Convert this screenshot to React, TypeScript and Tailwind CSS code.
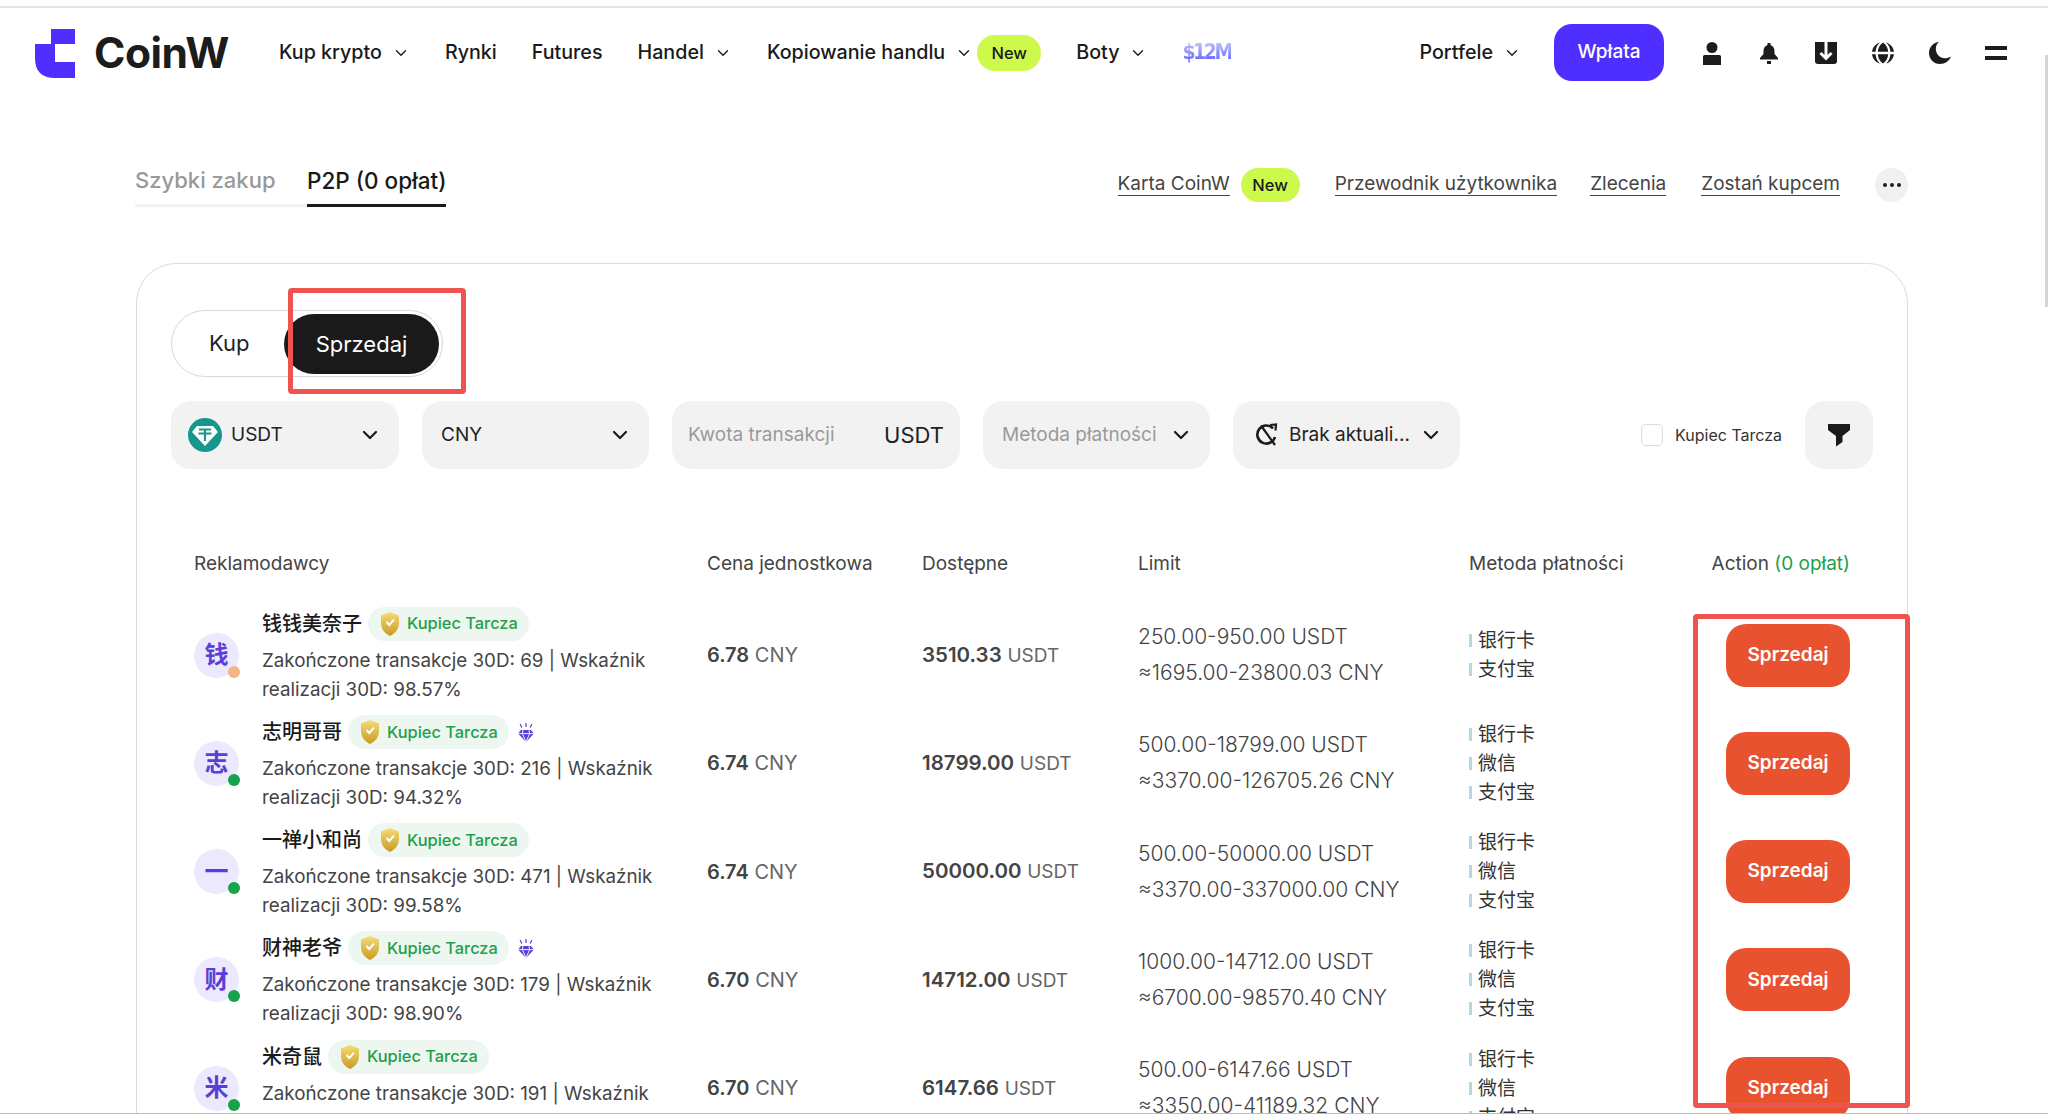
import { ChevronDown } from 'lucide-react';

type Row = {
  name: string;
  initial: string;
  diamond: boolean;
  online: boolean;
  orders: number;
  rate: string;
  price: string;
  avail: string;
  limit: string;
  limitCny: string;
  pay: string[];
};

const rows: Row[] = [
  { name: '钱钱美奈子', initial: '钱', diamond: false, online: false, orders: 69, rate: '98.57', price: '6.78', avail: '3510.33', limit: '250.00-950.00', limitCny: '1695.00-23800.03', pay: ['银行卡', '支付宝'] },
  { name: '志明哥哥', initial: '志', diamond: true, online: true, orders: 216, rate: '94.32', price: '6.74', avail: '18799.00', limit: '500.00-18799.00', limitCny: '3370.00-126705.26', pay: ['银行卡', '微信', '支付宝'] },
  { name: '一禅小和尚', initial: '一', diamond: false, online: true, orders: 471, rate: '99.58', price: '6.74', avail: '50000.00', limit: '500.00-50000.00', limitCny: '3370.00-337000.00', pay: ['银行卡', '微信', '支付宝'] },
  { name: '财神老爷', initial: '财', diamond: true, online: true, orders: 179, rate: '98.90', price: '6.70', avail: '14712.00', limit: '1000.00-14712.00', limitCny: '6700.00-98570.40', pay: ['银行卡', '微信', '支付宝'] },
  { name: '米奇鼠', initial: '米', diamond: false, online: true, orders: 191, rate: '97.41', price: '6.70', avail: '6147.66', limit: '500.00-6147.66', limitCny: '3350.00-41189.32', pay: ['银行卡', '微信', '支付宝'] },
];

function NavItem({ label, chevron = true }: { label: string; chevron?: boolean }) {
  return (
    <div className="flex items-center gap-[10px] text-[19.7px] font-medium text-[#1a1a1a]">
      {label}
      {chevron && <ChevronDown className="w-[18px] h-[18px]" strokeWidth={1.8} />}
    </div>
  );
}

function NewBadge({ className }: { className: string }) {
  return (
    <span className={`flex items-center justify-center rounded-full bg-[#ccf94c] text-[16.5px] font-medium text-[#1a1a1a] ${className}`}>
      New
    </span>
  );
}

function Shield({ id }: { id: string }) {
  return (
    <svg viewBox="0 0 20 26" className="w-[20px] h-[26px] shrink-0">
      <defs>
        <linearGradient id={id} x1="0" y1="0" x2="0" y2="1">
          <stop offset="0" stopColor="#f5dc78" />
          <stop offset="1" stopColor="#c99a22" />
        </linearGradient>
      </defs>
      <path d="M10 1 L19 4.5 V12 C19 18.5 15 22.5 10 25 C5 22.5 1 18.5 1 12 V4.5 Z" fill={`url(#${id})`} />
      <path d="M6.5 11 L9.3 14 L14 8.6" fill="none" stroke="#fff" strokeWidth="2" />
    </svg>
  );
}

function Diamond() {
  return (
    <svg viewBox="0 0 18 20" className="w-[18px] h-[20px] shrink-0" fill="#5a3fd6">
      <path d="M4 8 H14 L17 11.5 L9 20 L1 11.5 Z" />
      <path d="M8.4 1 H9.6 V5 H8.4 Z M2.6 2.4 L3.6 1.8 L5.4 5.2 L4.4 5.8 Z M15.4 2.4 L14.4 1.8 L12.6 5.2 L13.6 5.8 Z" />
      <path d="M1 11.6 H17 M6 8 L5.4 11.6 L9 20 L12.6 11.6 L12 8" fill="none" stroke="#fff" strokeWidth="0.9" />
    </svg>
  );
}

function Select({ width, label, muted, icon }: { width: string; label: string; muted?: boolean; icon?: React.ReactNode }) {
  return (
    <div className={`flex items-center h-[68px] rounded-[20px] bg-[#f2f2f2] pl-[19px] pr-[17px] ${width}`}>
      {icon}
      <span className={`flex-1 truncate text-[19px] ${muted ? 'text-[#9a9a9a]' : 'text-[#222]'}`}>{label}</span>
      <ChevronDown className="w-[24px] h-[24px] text-[#1a1a1a]" strokeWidth={2.2} />
    </div>
  );
}

function AdRow({ row }: { row: Row }) {
  return (
    <div className="grid grid-cols-[513px_215px_215px_332px_1fr] items-center h-[108.25px] text-[#444]">
      <div className="flex items-center">
        <div className="relative flex items-center justify-center w-[45px] h-[45px] rounded-full bg-[#ece8fd] text-[24px] font-semibold text-[#5a3fd6] shrink-0">
          {row.initial}
          <span className={`absolute right-[-1px] bottom-[0px] w-[12px] h-[12px] rounded-full ${row.online ? 'bg-[#16a34a]' : 'bg-[#f5b386]'}`} />
        </div>
        <div className="ml-[23px]">
          <div className="flex items-center h-[34px]">
            <span className="text-[20px] font-medium text-[#1a1a1a]">{row.name}</span>
            <span className="flex items-center gap-[7px] h-[34px] w-[161px] ml-[6px] pl-[12px] rounded-full bg-[#edf7ef] text-[16.4px] font-medium text-[#22a04a] whitespace-nowrap">
              <Shield id={`shield-${row.initial}`} />
              Kupiec Tarcza
            </span>
            {row.diamond && (
              <span className="ml-[8px]">
                <Diamond />
              </span>
            )}
          </div>
          <p className="mt-[5px] w-[420px] text-[18.8px] leading-[29px] text-[#444]">
            Zakończone transakcje 30D: {row.orders} | Wskaźnik
            <br />
            realizacji 30D: {row.rate}%
          </p>
        </div>
      </div>

      <div className="text-[20px]">
        <span className="font-semibold">{row.price}</span> <span className="font-normal text-[#666]">CNY</span>
      </div>

      <div className="text-[20.5px]">
        <span className="font-semibold">{row.avail}</span> <span className="text-[19px] text-[#666]">USDT</span>
      </div>

      <div className="pl-[1px] text-[21px] leading-[36px] font-light text-[#444]">
        <div>{row.limit} USDT</div>
        <div>≈{row.limitCny} CNY</div>
      </div>

      <div className="flex items-center justify-between">
        <div className="text-[19px] leading-[29px] text-[#333]">
          {row.pay.map((p) => (
            <div key={p} className="flex items-center gap-[6px]">
              <span className="w-[3px] h-[13px] bg-[#b5d6e4]" />
              {p}
            </div>
          ))}
        </div>
        <button className="w-[124px] h-[63px] rounded-[20px] bg-[#e9522f] text-[19px] font-semibold text-white">
          Sprzedaj
        </button>
      </div>
    </div>
  );
}

export default function App() {
  return (
    <div className="relative h-[1114px] overflow-hidden bg-white font-['Inter','Noto_Sans_CJK_SC',sans-serif]">

      {/* NAV */}

      <div className="mt-[6px] border-t-2 border-[#e6e6e6] h-[92px] flex items-center justify-between pl-[35px] pr-[41px]">

        <div className="flex items-center">
          <svg viewBox="0 0 41 49" className="w-[41px] h-[49px]">
            <path d="M16 0 H40 V15 H20 V33 H40 V49 H20 Q0 49 0 29 V15 H16 Z" fill="#4f2fff" />
          </svg>

          <span className="ml-[18px] mr-[50px] text-[42.5px] leading-none font-bold tracking-[-0.5px] text-[#1c1c1c]">
            CoinW
          </span>

          <div className="flex items-center gap-[35px]">
            <NavItem label="Kup krypto" />
            <NavItem label="Rynki" chevron={false} />
            <NavItem label="Futures" chevron={false} />
            <NavItem label="Handel" />
            <div className="flex items-center">
              <NavItem label="Kopiowanie handlu" />
              <NewBadge className="w-[64px] h-[36px] ml-[4px]" />
            </div>
            <NavItem label="Boty" />
            <span className="bg-linear-to-b from-[#dcd6ff] to-[#4f2fff] bg-clip-text text-transparent font-['DejaVu_Sans_Condensed','DejaVu_Sans'] text-[21px] font-bold tracking-[-2.5px]">
              $12M
            </span>
          </div>
        </div>

        <div className="flex items-center">
          <NavItem label="Portfele" />
          <button className="-mt-[2px] ml-[33px] mr-[36px] w-[110px] h-[57px] rounded-[18px] bg-[#4f2fff] text-[19px] font-medium text-white">
            Wpłata
          </button>

          <div className="flex items-center gap-[33px] text-[#1c1c1c]">
            <svg viewBox="0 0 24 24" className="w-[24px] h-[24px]" fill="currentColor">
              <circle cx="12" cy="6.5" r="5.5" />
              <path d="M3 15.5 A1.5 1.5 0 0 1 4.5 14 H19.5 A1.5 1.5 0 0 1 21 15.5 V24 H3 Z" />
            </svg>
            <svg viewBox="0 0 24 24" className="w-[24px] h-[24px]" fill="currentColor">
              <path d="M10.5 2 H13.5 V4 C16 5 17.5 7 17.5 10 V13 L21 17 V18.5 H3 V17 L6.5 13 V10 C6.5 7 8 5 10.5 4 Z" />
              <rect x="10" y="20" width="4" height="3" />
            </svg>
            <svg viewBox="0 0 24 24" className="w-[24px] h-[24px]">
              <path d="M1 1 H23 V20 A3 3 0 0 1 20 23 H4 A3 3 0 0 1 1 20 Z" fill="currentColor" />
              <path d="M12 1 V17 M6.5 12 L12 17.5 L17.5 12" fill="none" stroke="#fff" strokeWidth="3" />
            </svg>
            <svg viewBox="0 0 24 24" className="w-[24px] h-[24px]" fill="currentColor">
              <path d="M9 1.500 C6 4 4.800 7.500 4.600 10.800 H1 C1.500 6.500 4.500 2.800 9 1.500 Z M15 1.500 C19.500 2.800 22.500 6.500 23 10.800 H19.400 C19.200 7.500 18 4 15 1.500 Z M12 1.500 C15.500 4 17 7.500 17.200 10.800 H6.800 C7 7.500 8.500 4 12 1.500 Z" />
              <path d="M1 13.200 H4.600 C4.800 16.500 6 20 9 22.500 C4.500 21.200 1.500 17.500 1 13.200 Z M23 13.200 H19.400 C19.200 16.500 18 20 15 22.500 C19.500 21.200 22.500 17.500 23 13.200 Z M6.800 13.200 H17.200 C17 16.500 15.500 20 12 22.500 C8.500 20 7 16.500 6.800 13.200 Z" />
            </svg>
            <svg viewBox="0 0 24 24" className="w-[24px] h-[24px]" fill="currentColor">
              <path d="M11 1 C7 4 7 10 10 14 C13 17.500 18 18.500 23 15.500 C21.500 20 17 23 12 23 C5.500 23 1 18 1 12 C1 6 5.500 1.500 11 1 Z" />
            </svg>
            <div className="flex flex-col gap-[6px] w-[22px]">
              <span className="h-[4px] bg-current" />
              <span className="h-[4px] bg-current" />
            </div>
          </div>
        </div>

      </div>

      <div className="pl-[136px] pr-[140px]">

        {/* TABS */}

        <div className="flex items-start justify-between mt-[66px] h-[99px]">
          <div className="flex -ml-[1px]">
            <div className="w-[172px] h-[43px] border-b-[3px] border-[#f2f2f2] text-[22px] leading-[33px] font-medium text-[#999]">
              Szybki zakup
            </div>
            <div className="h-[43px] border-b-[3px] border-[#1a1a1a] text-[22.5px] leading-[33px] font-medium text-[#1a1a1a]">
              P2P (0 opłat)
            </div>
          </div>

          <div className="flex items-center h-[34px] mt-[4px] text-[19px] text-[#444]">
            <span className="border-b border-[#444] leading-[23px] -mt-[2px]">Karta CoinW</span>
            <NewBadge className="w-[59px] h-[34px] ml-[11px] mr-[35px]" />
            <span className="border-b border-[#444] leading-[23px] -mt-[2px]">Przewodnik użytkownika</span>
            <span className="border-b border-[#444] leading-[23px] -mt-[2px] ml-[33px]">Zlecenia</span>
            <span className="border-b border-[#444] leading-[23px] -mt-[2px] ml-[35px]">Zostań kupcem</span>
            <span className="flex items-center justify-center gap-[3px] w-[33px] h-[34px] ml-[35px] rounded-full bg-[#f0f0f0]">
              <i className="w-[4px] h-[4px] rounded-full bg-[#222]" />
              <i className="w-[4px] h-[4px] rounded-full bg-[#222]" />
              <i className="w-[4px] h-[4px] rounded-full bg-[#222]" />
            </span>
          </div>
        </div>

        {/* CARD */}

        <div className="w-[1772px] h-[900px] rounded-[40px] border border-[#dcdcdc] pt-[46px] pl-[34px] pr-[34px]">

          <div className="flex items-center w-[272px] h-[67px] p-[3px] rounded-full border border-[#d8d8d8] text-[22px]">
            <span className="flex-1 pl-[34px] text-[#222]">Kup</span>
            <span className="flex items-center justify-center w-[155px] h-[60px] pt-[1px] rounded-full bg-[#1a1a1a] text-white">
              Sprzedaj
            </span>
          </div>

          {/* FILTRY */}

          <div className="flex items-center gap-[23px] mt-[24px]">
            <Select
              width="w-[228px]"
              label="USDT"
              icon={
                <svg viewBox="0 0 34 34" className="w-[34px] h-[34px] mr-[9px] -ml-[2px] shrink-0">
                  <circle cx="17" cy="17" r="17" fill="#16968c" />
                  <path d="M9 8 H25 L30 14 L17 28 L4 14 Z" fill="#fff" />
                  <path d="M11 11.500 H23 M17 11.500 V23 M10.500 15.500 H23.500" fill="none" stroke="#16968c" strokeWidth="2.200" />
                </svg>
              }
            />
            <Select width="w-[227px]" label="CNY" />
            <div className="flex items-center justify-between w-[288px] h-[68px] rounded-[20px] bg-[#f2f2f2] pl-[16px] pr-[16px]">
              <span className="text-[19px] text-[#9a9a9a]">Kwota transakcji</span>
              <span className="text-[22px] text-[#222]">USDT</span>
            </div>
            <Select width="w-[227px]" label="Metoda płatności" muted />
            <Select
              width="w-[227px]"
              label="Brak aktuali..."
              icon={
                <svg viewBox="0 0 24 24" className="w-[24px] h-[24px] ml-[3px] mr-[10px] shrink-0" fill="none" stroke="#1a1a1a" strokeWidth="2.600">
                  <path d="M18 5.500 A9 9 0 1 0 20 14" />
                  <path d="M15 2 L21 1.500 L20.500 7.500" strokeWidth="2.200" />
                  <path d="M6 2.500 L20 22" strokeWidth="2.200" />
                </svg>
              }
            />
            <div className="flex items-center ml-auto">
              <span className="w-[22px] h-[22px] rounded-[5px] border border-[#dcdcdc]" />
              <span className="ml-[12px] text-[16px] text-[#333]">Kupiec Tarcza</span>
              <div className="flex items-center justify-center w-[68px] h-[68px] ml-[23px] rounded-[20px] bg-[#f2f2f2]">
                <svg viewBox="0 0 24 24" className="w-[24px] h-[24px]" fill="#1a1a1a">
                  <path d="M1 1 H23 V7 L15.500 13 V19 L9 23.500 V13 L1 7 Z" />
                </svg>
              </div>
            </div>
          </div>

          {/* TABLE */}

          <div className="pl-[23px] pr-[23px]">
            <div className="grid grid-cols-[513px_215px_215px_332px_1fr] items-center h-[132px] pt-[58px] text-[19px] text-[#444]">
              <span>Reklamodawcy</span>
              <span>Cena jednostkowa</span>
              <span>Dostępne</span>
              <span className="pl-[1px]">Limit</span>
              <div className="flex justify-between">
                <span>Metoda płatności</span>
                <span>
                  Action <span className="text-[#22a04a]">(0 opłat)</span>
                </span>
              </div>
            </div>

            {rows.map((row) => (
              <AdRow key={row.name} row={row} />
            ))}
          </div>

        </div>
      </div>

      {/* RED MARKS */}

      <div className="absolute left-[288px] top-[288px] w-[178px] h-[106px] rounded-[4px] border-[5px] border-[#ee5350]" />
      <div className="absolute left-[1693px] top-[614px] w-[217px] h-[494px] rounded-[4px] border-[5px] border-[#ee5350]" />

      {/* SCROLLBAR + BOTTOM EDGE */}

      <div className="absolute right-0 top-[55px] w-[3px] h-[252px] bg-[#d5d5d5]" />
      <div className="absolute left-0 right-0 bottom-0 h-[1px] bg-[#bdbdbd]" />
    </div>
  );
}
